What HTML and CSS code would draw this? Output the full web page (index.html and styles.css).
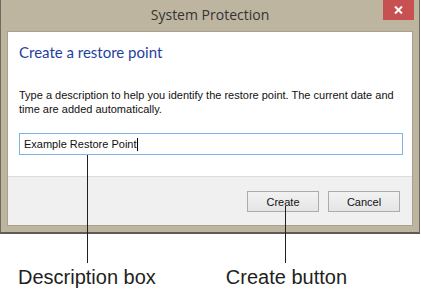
FILE: index.html
```
<!DOCTYPE html>
<html lang="en">
<head>
    <meta charset="utf-8">
    <title>System Protection</title>
    <link rel="stylesheet" href="styles.css">
</head>
<body>
    <div class="scene">
        <div class="window">
            <div class="titlebar">
                <span class="title">System Protection</span>
                <div class="close">
                    <svg width="9" height="8" viewBox="0 0 9 8">
                        <path d="M1 0.5 L8 7.5 M8 0.5 L1 7.5" stroke="#fff" stroke-width="2" fill="none"/>
                    </svg>
                </div>
            </div>
            <div class="dialog">
                <div class="main">
                    <h1>Create a restore point</h1>
                    <p>Type a description to help you identify the restore point. The current date and time are added automatically.</p>
                    <div class="field">Example Restore Point<span class="caret"></span></div>
                </div>
                <div class="footer">
                    <button class="btn">Create</button>
                    <button class="btn">Cancel</button>
                </div>
            </div>
        </div>

        <div class="labels">
            <span class="label desc">Description box</span>
            <span class="label create">Create button</span>
        </div>

        <div class="leader one"></div>
        <div class="leader two"></div>
    </div>
</body>
</html>
```

FILE: styles.css
```
body {
    margin: 0;
    background-color: white;
}

.scene {
    position: relative;
    width: 421px;
    height: 292px;
}

.window {
    width: 418px;
    height: 232px;
    background-color: #bdb59f;
    border-left: 1px solid #6e6a60;
    border-right: 1px solid #6e6a60;
    border-bottom: 2px solid #5e5b55;
    display: flex;
    flex-direction: column;
}

.titlebar {
    position: relative;
    height: 31px;
    display: flex;
    justify-content: center;
}

.title {
    font-family: "Open Sans", sans-serif;
    font-size: 14px;
    line-height: 20px;
    padding-top: 5px;
    color: #333;
}

.close {
    position: absolute;
    top: 0;
    right: 5px;
    width: 31px;
    height: 20px;
    background-color: #c75050;
    display: flex;
    align-items: center;
    justify-content: center;
}

.dialog {
    margin: 0 6px;
    height: 193px;
    border: 1px solid #a8a190;
    display: flex;
    flex-direction: column;
}

.main {
    background-color: white;
    padding: 10px 9px 0 11px;
    height: 134px;
    border-bottom: 1px solid #dcdcdc;
}

h1 {
    margin: 0;
    font-family: Lato, sans-serif;
    font-weight: normal;
    font-size: 15px;
    line-height: 20px;
    color: #1f3f9f;
}

p {
    margin: 26px 0 0 0;
    font-family: "Liberation Sans", sans-serif;
    font-size: 11px;
    line-height: 14px;
    color: #111;
}

.field {
    margin-top: 17px;
    height: 20px;
    border: 1px solid #7eb4ea;
    padding-left: 4px;
    font-family: "Liberation Sans", sans-serif;
    font-size: 11px;
    line-height: 20px;
    color: #111;
    display: flex;
    align-items: center;
}

.caret {
    display: inline-block;
    width: 1px;
    height: 13px;
    background-color: #000;
}

.footer {
    flex: 1;
    background-color: #f0f0f0;
    display: flex;
    justify-content: flex-end;
    align-items: flex-start;
    gap: 9px;
    padding: 14px 12px 0 0;
}

.btn {
    width: 72px;
    height: 21px;
    padding: 0;
    border: 1px solid #acacac;
    background: linear-gradient(#f2f2f2, #e5e5e5);
    font-family: "Liberation Sans", sans-serif;
    font-size: 11px;
    color: #111;
}

.labels {
    display: flex;
    padding: 32px 0 0 18px;
    gap: 70px;
}

.label {
    font-family: "Liberation Sans", sans-serif;
    font-size: 20px;
    line-height: 22px;
    color: #231f20;
}

.leader {
    position: absolute;
    width: 1px;
    background-color: #231f20;
}

.leader.one {
    left: 87px;
    top: 155px;
    height: 108px;
}

.leader.two {
    left: 285px;
    top: 206px;
    height: 57px;
}
```
